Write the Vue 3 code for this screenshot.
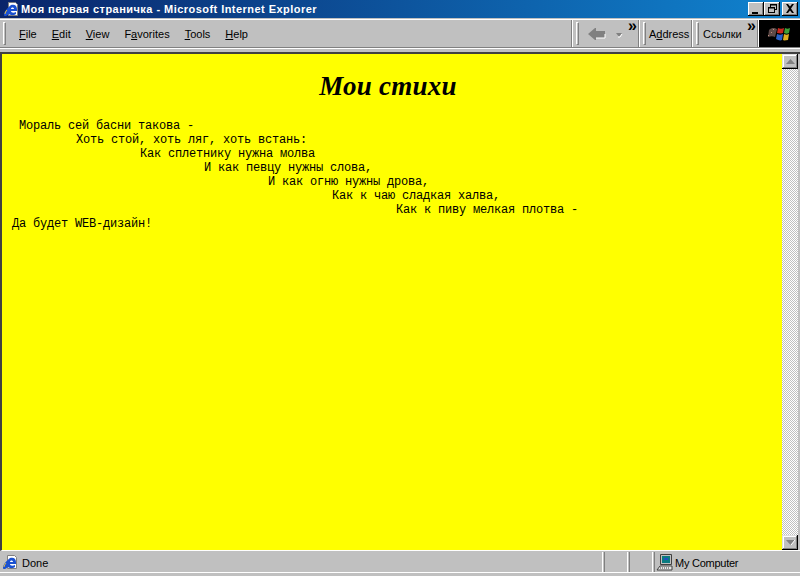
<script setup>
const menus = [
  { u: 'F', r: 'ile' },
  { u: 'E', r: 'dit' },
  { u: 'V', r: 'iew' },
  { p: 'F', u: 'a', r: 'vorites' },
  { u: 'T', r: 'ools' },
  { u: 'H', r: 'elp' }
]
const poem = ` Мораль сей басни такова -
\tХоть стой, хоть ляг, хоть встань:
\t\tКак сплетнику нужна молва
\t\t\tИ как певцу нужны слова,
\t\t\t\tИ как огню нужны дрова,
\t\t\t\t\tКак к чаю сладкая халва,
\t\t\t\t\t\tКак к пиву мелкая плотва -
Да будет WEB-дизайн!`
</script>

<template>
  <div class="window">
    <header class="titlebar">
      <svg class="ie" width="16" height="16" viewBox="0 0 16 16">
        <path d="M5.500 1.500h7l2 2v11h-9z" fill="#fff" stroke="#808080" />
        <path d="M1 14c0-3 3-7 7-10 3-1 6 0 6 4v2H8c0 2 3 2 5 1v2c-3 2-6 1-7 0-2 2-5 3-5 1z" fill="#1a50d0" />
        <path d="M8 8h3c0-2-3-2-3 0z" fill="#fff" />
        <path d="M2 13c0-1 1-3 2-4" fill="none" stroke="#e8c040" />
      </svg>
      <span class="title">Моя первая страничка - Microsoft Internet Explorer</span>
      <div class="caption">
        <button class="cbtn">
          <svg width="14" height="12" viewBox="0 0 14 12"><path d="M3 9h6v2H3z" /></svg>
        </button>
        <button class="cbtn">
          <svg width="14" height="12" viewBox="0 0 14 12"><path fill-rule="evenodd" d="M5 1h7v6h-2v3H3V4h2zM6 2.500V4h4v2h1V2.500zM4 5.500V9h5V5.500z" /></svg>
        </button>
        <button class="cbtn close">
          <svg width="14" height="12" viewBox="0 0 14 12"><path d="M3 1h2l2 2.500L9 1h2L8 5.500 11 10H9L7 7.500 5 10H3l3-4.500z" /></svg>
        </button>
      </div>
    </header>

    <nav class="toolbar">
      <div class="band menu">
        <i class="grip"></i>
        <span v-for="m in menus" :key="m.r" class="item">{{ m.p }}<u>{{ m.u }}</u>{{ m.r }}</span>
      </div>
      <div class="band back">
        <i class="grip"></i>
        <svg width="24" height="16" viewBox="0 0 24 16">
          <path d="M1 8l7-6h1v3h9v7H9v2H8z" fill="#808080" />
          <path d="M9 12h9V8" fill="none" stroke="#fff" />
        </svg>
        <svg class="drop" width="8" height="6" viewBox="0 0 8 6"><path d="M1 1h6L4 5z" fill="#808080" /><path d="M3 5h2l2-3" fill="none" stroke="#fff" /></svg>
        <b class="chev">»</b>
      </div>
      <div class="band addr">
        <i class="grip"></i>
        <span>A<u>d</u>dress</span>
      </div>
      <div class="band links">
        <i class="grip"></i>
        <span>Ссылки</span>
        <b class="chev">»</b>
      </div>
      <div class="throbber">
        <svg width="30" height="24" viewBox="0 0 30 24">
          <path d="M4 8c3-3 6-2 8-1l-2 8c-2-1-4-1-7 0z" fill="#5e4a48" />
          <path d="M6 10h1v1H6zM3 13h1v1H3zM8 7h1v1H8z" fill="#c09080" />
          <path d="M13 6c2 1 4 1 6 0l-1 5c-2 1-4 0-6 0z" fill="#c8281e" />
          <path d="M20 6c2 1 3 1 5 0l-1 5c-2 1-3 1-5 0z" fill="#3fa038" />
          <path d="M12 12c2 1 4 1 6 0l-1 6c-2 1-4 0-6-1z" fill="#2a62c8" />
          <path d="M19 12c2 1 3 1 5 0l-1 6c-2 0-4 1-5 0z" fill="#e0b020" />
        </svg>
      </div>
    </nav>

    <main class="viewport">
      <section class="page">
        <h1>Мои стихи</h1>
        <pre>{{ poem }}</pre>
      </section>
      <aside class="scrollbar">
        <button class="sbtn"><svg width="9" height="5" viewBox="0 0 9 5"><path d="M4.500 0L9 5H0z" fill="#808080" /></svg></button>
        <div class="track"></div>
        <button class="sbtn"><svg width="9" height="5" viewBox="0 0 9 5"><path d="M0 0h9L4.500 5z" fill="#808080" /><path d="M5 5l4-5" stroke="#fff" fill="none" /></svg></button>
      </aside>
    </main>

    <footer class="status">
      <div class="cell main">
        <svg width="16" height="16" viewBox="0 0 16 16">
          <path d="M5.500 1.500h7l2 2v11h-9z" fill="#fff" stroke="#808080" />
          <path d="M1 14c0-3 3-7 7-10 3-1 6 0 6 4v2H8c0 2 3 2 5 1v2c-3 2-6 1-7 0-2 2-5 3-5 1z" fill="#1a50d0" />
          <path d="M8 8h3c0-2-3-2-3 0z" fill="#fff" />
          <path d="M2 13c0-1 1-3 2-4" fill="none" stroke="#e8c040" />
        </svg>
        <span class="stext">Done</span>
      </div>
      <div class="cell small"></div>
      <div class="cell small"></div>
      <div class="cell computer">
        <svg width="18" height="18" viewBox="0 0 18 18">
          <path d="M4.500 1.500h11v10h-11z" fill="#c0c0c0" stroke="#404040" />
          <path d="M6 3h8v7H6z" fill="#0a7a80" />
          <path d="M8 5h4v2H8z" fill="#2050c0" />
          <path d="M1 17l3-4h12v4z" fill="#e8e8e8" stroke="#404040" />
          <path d="M4 15h10" stroke="#404040" stroke-dasharray="1 1" />
        </svg>
        <span class="stext tight">My Computer</span>
      </div>
    </footer>
  </div>
</template>

<style>
html, body { margin: 0; background: #c0c0c0; }
</style>

<style scoped>
.window {
  width: 800px;
  height: 576px;
  display: flex;
  flex-direction: column;
  background: #c0c0c0;
  font-family: "Liberation Sans", Arial, sans-serif;
  overflow: hidden;
}
.titlebar {
  height: 18px;
  flex: none;
  display: flex;
  align-items: center;
  padding: 0 2px 0 3px;
  box-sizing: border-box;
  background: linear-gradient(90deg, #0a246a 0%, #1084d0 100%);
  color: #fff;
}
.ie { flex: none; }
.title {
  margin-left: 2px;
  font-size: 11px;
  font-weight: 700;
  letter-spacing: 0.46px;
  white-space: nowrap;
}
.caption { margin-left: auto; display: flex; }
.cbtn {
  width: 16px;
  height: 14px;
  padding: 0;
  margin: 0;
  display: flex;
  align-items: center;
  justify-content: center;
  background: #c0c0c0;
  border: 0;
  box-shadow: inset -1px -1px 0 #000, inset 1px 1px 0 #fff, inset -2px -2px 0 #808080;
}
.cbtn.close { margin-left: 2px; }
.toolbar {
  height: 30px;
  flex: none;
  box-sizing: border-box;
  margin-top: 1px;
  display: flex;
  background: #c0c0c0;
  border-top: 1px solid #fff;
  border-bottom: 1px solid #fff;
  box-shadow: inset 0 -1px 0 #808080;
  font-size: 11px;
  color: #000;
}
.band {
  position: relative;
  display: flex;
  align-items: center;
  box-sizing: border-box;
  height: 27px;
  padding-left: 16px;
  border-right: 1px solid #808080;
  box-shadow: 1px 0 0 #fff;
  margin-right: 1px;
}
.grip {
  position: absolute;
  left: 3px;
  top: 2px;
  width: 3px;
  height: 23px;
  box-sizing: border-box;
  background: #c0c0c0;
  border: 1px solid;
  border-color: #fff #808080 #808080 #fff;
}
.menu { width: 572px; padding-left: 19px; }
.item { margin-right: 15px; white-space: nowrap; }
.back { width: 66px; padding-left: 14px; }
.drop { margin-left: 4px; margin-top: 3px; }
.chev {
  position: absolute;
  right: 1px;
  top: -3px;
  font: 700 16px/18px "Liberation Sans", sans-serif;
}
.addr { width: 52px; padding-left: 9px; }
.links { width: 65px; padding-left: 10px; }
.throbber {
  width: 41px;
  height: 27px;
  margin-left: auto;
  flex: none;
  background: #000;
  display: flex;
  align-items: center;
  justify-content: center;
}
.viewport {
  flex: none;
  height: 499px;
  margin-top: 3px;
  display: flex;
  box-sizing: border-box;
  padding-right: 2px;
  border-top: 2px solid #404040;
  border-left: 2px solid #404040;
  border-bottom: 1px solid #fff;
}
.page {
  flex: 1;
  background: #ff0;
  min-width: 0;
  overflow: hidden;
}
h1 {
  margin: 16px 8px 0 0;
  text-align: center;
  font: italic 700 27px/32px "Liberation Serif", "Times New Roman", serif;
  letter-spacing: 0.25px;
  color: #000;
}
pre {
  margin: 17px 0 0 10px;
  font: 12px/14px "Liberation Mono", "Courier New", monospace;
  letter-spacing: -0.2px;
  tab-size: 64px;
  color: #000;
}
.scrollbar {
  width: 16px;
  flex: none;
  display: flex;
  flex-direction: column;
}
.sbtn {
  width: 16px;
  height: 15px;
  padding: 0;
  flex: none;
  border: 0;
  background: #c0c0c0;
  display: flex;
  align-items: center;
  justify-content: center;
  box-shadow: inset -1px -1px 0 #000, inset 1px 1px 0 #dfdfdf, inset -2px -2px 0 #808080, inset 2px 2px 0 #fff;
}
.track {
  flex: 1;
  background-color: #fff;
  background-image: conic-gradient(#c0c0c0 25%, #fff 0 50%, #c0c0c0 0 75%, #fff 0);
  background-size: 2px 2px;
}
.status {
  height: 21px;
  flex: none;
  margin-top: 1px;
  display: flex;
  gap: 1px;
  font-size: 11px;
  color: #000;
  box-sizing: border-box;
  border-bottom: 1px solid #fff;
}
.cell {
  box-sizing: border-box;
  height: 20px;
  display: flex;
  align-items: center;
  border-right: 1px solid #fff;
  border-left: 1px solid #808080;
}
.stext { padding-top: 2px; }
.tight { letter-spacing: -0.25px; }
.main { width: 603px; border-left: 0; padding-left: 2px; gap: 4px; }
.small { width: 24px; }
.computer { flex: 1; gap: 1px; padding-left: 1px; border-right: 0; }
</style>
